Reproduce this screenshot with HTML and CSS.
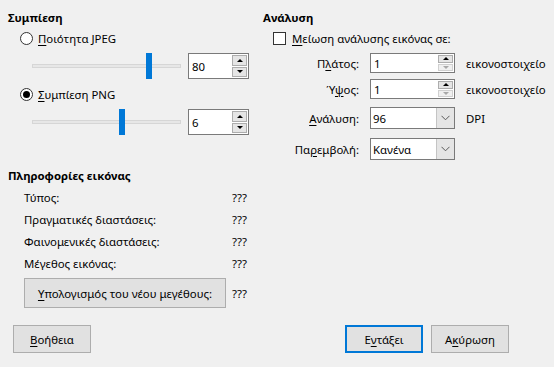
FILE: index.html
```html
<!DOCTYPE html>
<html lang="el">
<head>
<meta charset="utf-8">
<link rel="stylesheet" href="styles.css">
</head>
<body>
<div class="dialog">
  <div class="top">
    <section class="col-left">
      <h2 class="title">Συμπίεση</h2>
      <div class="radio-row"><span class="radio"></span><span><u>Π</u>οιότητα JPEG</span></div>
      <div class="slider-row">
        <div class="slider"><div class="track"></div><div class="thumb" style="left:114px"></div></div>
        <div class="spin">
          <span class="val">80</span>
          <div class="spin-btns"><span class="sb up"></span><span class="sb down"></span></div>
        </div>
      </div>
      <div class="radio-row second"><span class="radio checked"></span><span><u>Σ</u>υμπίεση PNG</span></div>
      <div class="slider-row">
        <div class="slider"><div class="track"></div><div class="thumb" style="left:87px"></div></div>
        <div class="spin">
          <span class="val">6</span>
          <div class="spin-btns"><span class="sb up"></span><span class="sb down"></span></div>
        </div>
      </div>
    </section>
    <section class="col-right">
      <h2 class="title">Ανάλυση</h2>
      <div class="check-row"><span class="checkbox"></span><span><u>Μ</u>είωση ανάλυσης εικόνας σε:</span></div>
      <div class="field-row r1">
        <span class="flabel">Π<u>λ</u>άτος:</span>
        <div class="spin wide small"><span class="val">1</span><div class="spin-btns"><span class="sb up"></span><span class="sb down dis"></span></div></div>
        <span class="unit">εικονοστοιχείο</span>
      </div>
      <div class="field-row r2">
        <span class="flabel">Ύ<u>ψ</u>ος:</span>
        <div class="spin wide small"><span class="val">1</span><div class="spin-btns"><span class="sb up"></span><span class="sb down dis"></span></div></div>
        <span class="unit">εικονοστοιχείο</span>
      </div>
      <div class="field-row r3">
        <span class="flabel"><u>Α</u>νάλυση:</span>
        <div class="combo"><span class="val">96</span><span class="drop"><svg width="9" height="6" viewBox="0 0 9 6"><polyline points="0.5,0.8 4.5,4.8 8.5,0.8" fill="none" stroke="#5a5a5a" stroke-width="1"/></svg></span></div>
        <span class="unit">DPI</span>
      </div>
      <div class="field-row r4">
        <span class="flabel">Πα<u>ρ</u>εμβολή:</span>
        <div class="combo"><span class="val">Κανένα</span><span class="drop"><svg width="9" height="6" viewBox="0 0 9 6"><polyline points="0.5,0.8 4.5,4.8 8.5,0.8" fill="none" stroke="#5a5a5a" stroke-width="1"/></svg></span></div>
      </div>
    </section>
  </div>
  <section class="info">
    <h2 class="title">Πληροφορίες εικόνας</h2>
    <div class="info-grid">
      <span>Τύπος:</span><span>???</span>
      <span>Πραγματικές διαστάσεις:</span><span>???</span>
      <span>Φαινομενικές διαστάσεις:</span><span>???</span>
      <span>Μέγεθος εικόνας:</span><span>???</span>
    </div>
    <div class="calc-row">
      <button class="btn calc"><u>Υ</u>πολογισμός του νέου μεγέθους:</button>
      <span>???</span>
    </div>
  </section>
  <div class="footer">
    <button class="btn"><u>Β</u>οήθεια</button>
    <div class="spacer"></div>
    <button class="btn default">Ε<u>ν</u>τάξει</button>
    <button class="btn">Α<u>κ</u>ύρωση</button>
  </div>
</div>
</body>
</html>
```

FILE: styles.css
```css
* { box-sizing: border-box; }
html, body { margin: 0; padding: 0; }
body {
  background: #f0f0f0;
  font-family: "Noto Sans", "DejaVu Sans", sans-serif;
  font-size: 11.4px;
  color: #000;
  width: 554px;
  height: 367px;
  overflow: hidden;
}
u { text-decoration: underline; text-underline-offset: 2px; text-decoration-thickness: 1px; }
.dialog { padding: 10px 0 0 8px; }
.top { display: flex; align-items: flex-start; }
.col-left { width: 255px; }
.col-right { flex: 1; }
.title {
  margin: 0;
  font-size: 11.4px;
  font-weight: bold;
  line-height: 16px;
  height: 16px;
}
.radio-row, .check-row {
  display: flex;
  align-items: center;
  height: 16px;
  margin-top: 4px;
  white-space: nowrap;
}
.radio-row { padding-left: 12px; gap: 5px; }
.radio-row.second { margin-top: 7px; }
.radio {
  width: 13px; height: 13px;
  border: 1px solid #333;
  border-radius: 50%;
  background: #fff;
  display: flex; align-items: center; justify-content: center;
}
.radio.checked::after {
  content: "";
  width: 7px; height: 7px;
  border-radius: 50%;
  background: #000;
}
.check-row { padding-left: 10px; gap: 6px; }
.checkbox {
  width: 13px; height: 13px;
  border: 1px solid #333;
  background: #fff;
}
.slider-row {
  display: flex;
  align-items: center;
  gap: 7px;
  padding-left: 24px;
  margin-top: 7px;
  height: 26px;
}
.slider { position: relative; width: 149px; height: 26px; }
.track {
  position: absolute; left: 0; right: 0; top: 11px;
  height: 4px;
  background: #e7e7e7;
  border: 1px solid #d6d6d6;
}
.thumb {
  position: absolute; top: 0;
  width: 6px; height: 26px;
  background: #0078d7;
}
.spin {
  position: relative;
  width: 61px; height: 26px;
  background: #fff;
  border: 1px solid #7a7a7a;
  display: flex; align-items: center;
}
.spin .val { padding-left: 3px; }
.spin-btns {
  position: absolute; right: 1px; top: 1px; bottom: 1px;
  width: 15px;
  display: flex; flex-direction: column; gap: 1px;
}
.sb {
  flex: 1;
  background: #e5e5e5;
  border: 1px solid #adadad;
  display: flex; align-items: center; justify-content: center;
}
.sb::after {
  content: "";
  width: 0; height: 0;
  border-left: 3px solid transparent;
  border-right: 3px solid transparent;
}
.sb.up::after { border-bottom: 3px solid #000; }
.sb.down::after { border-top: 3px solid #000; }
.sb.dis { background: #f0f0f0; border-color: #d0d0d0; }
.sb.dis::after { border-top-color: #a8a8a8; }
.spin.wide { width: 85px; height: 20px; }
.field-row {
  display: flex;
  align-items: center;
  white-space: nowrap;
}
.r1 { margin-top: 7px; }
.r2 { margin-top: 6px; }
.r3 { margin-top: 8px; }
.r4 { margin-top: 9px; }
.flabel { width: 96px; text-align: right; margin-right: 11px; }
.unit { margin-left: 11px; }
.combo {
  width: 85px; height: 22px;
  background: #fff;
  border: 1px solid #7a7a7a;
  display: flex; align-items: center;
}
.combo .val { flex: 1; padding-left: 2px; }
.drop {
  width: 18px; align-self: stretch;
  background: #e5e5e5;
  border-left: 1px solid #c4c4c4;
  display: flex; align-items: center; justify-content: center;
}
.info { margin-top: 8px; }
.info-grid {
  margin-top: 2px;
  padding-left: 16px;
  display: grid;
  grid-template-columns: 208px auto;
  grid-auto-rows: 22px;
  align-items: center;
}
.calc-row {
  display: flex; align-items: center; gap: 6px;
  padding-left: 16px;
  margin-top: 4px;
}
.btn {
  font: inherit;
  color: #000;
  background: #e1e1e1;
  border: 1px solid #adadad;
  height: 28px;
  width: 78px;
  padding: 0;
  margin: 0;
}
.btn.calc { width: 202px; height: 30px; }
.btn.default { border: 2px solid #0078d7; }
.footer {
  display: flex;
  align-items: center;
  margin-top: 17px;
  padding-left: 5px;
  padding-right: 45px;
  gap: 8px;
}
.spacer { flex: 1; }
```
